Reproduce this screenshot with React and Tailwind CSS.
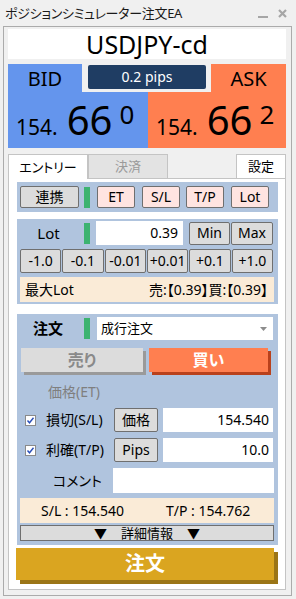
import React from 'react';

const GreenBar = () => <div className="w-[6px] h-[21px] bg-[#3cb371] shrink-0" />;

const GrayBtn = ({ children, className = '' }) => (
  <div
    className={`flex items-center justify-center shrink-0 bg-[#dcdcdc] border border-[#6f6f6f] rounded-[2px] text-[14px] leading-none ${className}`}
  >
    {children}
  </div>
);

const PinkBtn = ({ children, className = '' }) => (
  <div
    className={`flex items-center justify-center shrink-0 w-[38px] h-[22px] bg-[#ffe4e1] border border-[#6f6f6f] rounded-[2px] text-[14px] leading-none ${className}`}
  >
    {children}
  </div>
);

const Check = () => (
  <div className="w-[11px] h-[11px] bg-white border border-[#8a8a8a] flex items-center justify-center shrink-0">
    <svg width="9" height="9" viewBox="0 0 9 9" aria-hidden="true">
      <path d="M1.5 4.5 L3.5 6.8 L7.5 1.8" fill="none" stroke="#2a4fb8" strokeWidth="1.4" />
    </svg>
  </div>
);

const Price = ({ big, sup }) => (
  <div className="flex items-baseline pl-[8px] pt-[8px]">
    <span className="text-[21px] leading-none">154.</span>
    <span className="text-[40px] leading-none ml-[9px]">{big}</span>
    <span className="text-[26px] leading-none ml-[7px] self-start mt-[1px]">{sup}</span>
  </div>
);

const steps = ['-1.0', '-0.1', '-0.01', '+0.01', '+0.1', '+1.0'];

export default function App() {
  return (
    <div className="w-[296px] h-[599px] bg-[#f0f0f0] text-black overflow-hidden font-['Noto_Sans','Noto_Sans_CJK_JP',sans-serif] [font-feature-settings:'palt']">
      {/* Title bar */}
      <div className="h-[26px] flex items-center justify-between pl-[5px] pr-[9px]">
        <span className="text-[13px] leading-none text-[#1a1a1a] tracking-[-0.3px]">ポジションシミュレーター注文EA</span>
        <div className="flex items-center gap-[10px]">
          <div className="w-[10px] h-[2px] bg-[#a6a6a6] mt-[8px]" />
          <svg width="9" height="9" viewBox="0 0 9 9" aria-hidden="true">
            <path d="M1 1 L8 8 M8 1 L1 8" stroke="#a6a6a6" strokeWidth="2.2" />
          </svg>
        </div>
      </div>

      {/* Window frame */}
      <div className="ml-[3px] w-[289px] h-[570px] border border-[#ababab] pl-[4px] pr-[5px] pt-[2px] pb-[5px] flex flex-col">
        {/* Symbol */}
        <div className="h-[30px] bg-white flex items-center justify-center text-[25px] leading-none shrink-0">
          USDJPY-cd
        </div>

        {/* Bid / Ask */}
        <div className="mt-[5px] flex flex-col shrink-0">
          <div className="flex h-[28px]">
            <div className="w-[74px] bg-[#6495ed] flex items-center justify-center pt-[2px] text-[20px] leading-none">BID</div>
            <div className="w-[129px]">
              <div className="ml-[6px] mt-[1px] w-[118px] h-[24px] bg-[#1f3d63] rounded-[2px] flex items-center justify-center text-white text-[14px] leading-none">
                0.2 pips
              </div>
            </div>
            <div className="w-[75px] bg-[#ff7f50] flex items-center justify-center pt-[2px] text-[20px] leading-none">ASK</div>
          </div>
          <div className="flex h-[56px]">
            <div className="w-[140px] bg-[#6495ed]">
              <Price big="66" sup="0" />
            </div>
            <div className="w-[138px] bg-[#ff7f50]">
              <Price big="66" sup="2" />
            </div>
          </div>
        </div>

        {/* Tabs */}
        <div className="mt-[6px] flex h-[25px] shrink-0">
          <div className="w-[80px] h-[25px] bg-white border-l border-t border-r border-[#c4c4c4] flex items-center justify-center text-[13px] leading-none">
            エントリー
          </div>
          <div className="w-[80px] h-[25px] bg-[#e3e3e3] border border-[#c4c4c4] flex items-center justify-center text-[13px] leading-none text-[#9a9a9a]">
            決済
          </div>
          <div className="w-[68px] h-[25px] border-b border-[#c4c4c4]" />
          <div className="w-[50px] h-[25px] bg-white border border-[#c4c4c4] flex items-center justify-center text-[13px] leading-none">
            設定
          </div>
        </div>

        {/* Tab panel */}
        <div className="flex-1 bg-white border-l border-r border-b border-[#c4c4c4] flex flex-col">
          {/* Link row */}
          <div className="mt-[3px] ml-[8px] w-[261px] h-[30px] bg-[#b0c4de] flex items-center pl-[3px]">
            <GrayBtn className="w-[59px] h-[22px]">連携</GrayBtn>
            <div className="ml-[5px]"><GreenBar /></div>
            <PinkBtn className="ml-[7px]">ET</PinkBtn>
            <PinkBtn className="ml-[7px]">S/L</PinkBtn>
            <PinkBtn className="ml-[6px]">T/P</PinkBtn>
            <PinkBtn className="ml-[7px]">Lot</PinkBtn>
          </div>

          {/* Lot section */}
          <div className="mt-[7px] ml-[8px] w-[261px] h-[85px] bg-[#b0c4de] pt-[2px] pl-[3px] flex flex-col">
            <div className="flex items-center h-[24px]">
              <div className="w-[57px] text-center text-[15px] leading-none">Lot</div>
              <div className="ml-[7px]"><GreenBar /></div>
              <div className="ml-[6px] w-[87px] h-[24px] bg-white flex items-center justify-end pr-[5px] text-[14px] leading-none">0.39</div>
              <GrayBtn className="ml-[6px] w-[41px] h-[23px]">Min</GrayBtn>
              <GrayBtn className="ml-[1px] w-[42px] h-[23px]">Max</GrayBtn>
            </div>
            <div className="mt-[4px] w-[253px] grid grid-cols-6 gap-[1px]">
              {steps.map((s) => (
                <GrayBtn key={s} className="h-[24px]">{s}</GrayBtn>
              ))}
            </div>
            <div className="mt-[4px] w-[254px] h-[25px] bg-[#faebd7] flex items-center justify-between pl-[5px] pr-[6px] text-[14px] leading-none">
              <span>最大Lot</span>
              <span>売:【0.39】買:【0.39】</span>
            </div>
          </div>

          {/* Order section */}
          <div className="mt-[10px] ml-[8px] w-[261px] h-[231px] bg-[#b0c4de] pt-[3px] pl-[3px] flex flex-col">
            <div className="flex items-center h-[23px]">
              <div className="w-[57px] pr-[1px] text-center text-[15px] leading-none font-bold">注文</div>
              <div className="ml-[7px]"><GreenBar /></div>
              <div className="ml-[7px] w-[176px] h-[23px] bg-white flex items-center justify-between pl-[4px] pr-[6px] text-[13px] leading-none">
                <span>成行注文</span>
                <svg width="7" height="4" viewBox="0 0 7 4" aria-hidden="true">
                  <path d="M0 0 L7 0 L3.5 4 Z" fill="#8c8c8c" />
                </svg>
              </div>
            </div>

            <div className="mt-[8px] flex h-[24px]">
              <div className="ml-[1px] w-[122px] h-[24px] bg-[#dcdcdc] shadow-[3px_3px_0_#9a9a9a] flex items-center justify-center text-[16px] leading-none font-bold text-[#8a8a8a]">
                売り
              </div>
              <div className="ml-[6px] w-[119px] h-[24px] bg-[#ff7f50] shadow-[3px_3px_0_#b9411c] flex items-center justify-center text-[16px] leading-none font-bold text-white">
                買い
              </div>
            </div>

            <div className="mt-[10px] h-[20px] flex items-center pl-[28px] text-[14px] leading-none text-[#7f7f7f]">
              価格(ET)
            </div>

            <div className="mt-[6px] flex items-center h-[24px]">
              <div className="ml-[5px]"><Check /></div>
              <div className="ml-[10px] w-[68px] text-[14px] leading-none">損切(S/L)</div>
              <GrayBtn className="w-[44px] h-[24px]">価格</GrayBtn>
              <div className="ml-[5px] w-[110px] h-[24px] bg-white flex items-center justify-end pr-[4px] text-[14px] leading-none">154.540</div>
            </div>

            <div className="mt-[6px] flex items-center h-[24px]">
              <div className="ml-[5px]"><Check /></div>
              <div className="ml-[10px] w-[68px] text-[14px] leading-none">利確(T/P)</div>
              <GrayBtn className="w-[44px] h-[24px]">Pips</GrayBtn>
              <div className="ml-[5px] w-[110px] h-[24px] bg-white flex items-center justify-end pr-[4px] text-[14px] leading-none">10.0</div>
            </div>

            <div className="mt-[6px] flex items-center h-[25px]">
              <div className="w-[93px] pl-[33px] text-[14px] leading-none">コメント</div>
              <div className="w-[161px] h-[25px] bg-white" />
            </div>

            <div className="mt-[5px] w-[254px] h-[25px] bg-[#faebd7] flex items-center pl-[21px] text-[14px] leading-none">
              <span className="w-[125px]">S/L : 154.540</span>
              <span>T/P : 154.762</span>
            </div>

            <div className="mt-[2px] w-[254px] h-[16px] bg-[#dcdcdc] border border-[#6f6f6f] flex items-center justify-center gap-[14px] text-[13px] leading-none">
              <span>▼</span>
              <span>詳細情報</span>
              <span>▼</span>
            </div>
          </div>

          {/* Order button */}
          <div className="mt-[3px] ml-[7px] w-[258px] h-[32px] bg-[#daa520] shadow-[4px_4px_0_#9b7516] flex items-center justify-center text-white text-[20px] leading-none font-bold">
            注文
          </div>
        </div>
      </div>
    </div>
  );
}
